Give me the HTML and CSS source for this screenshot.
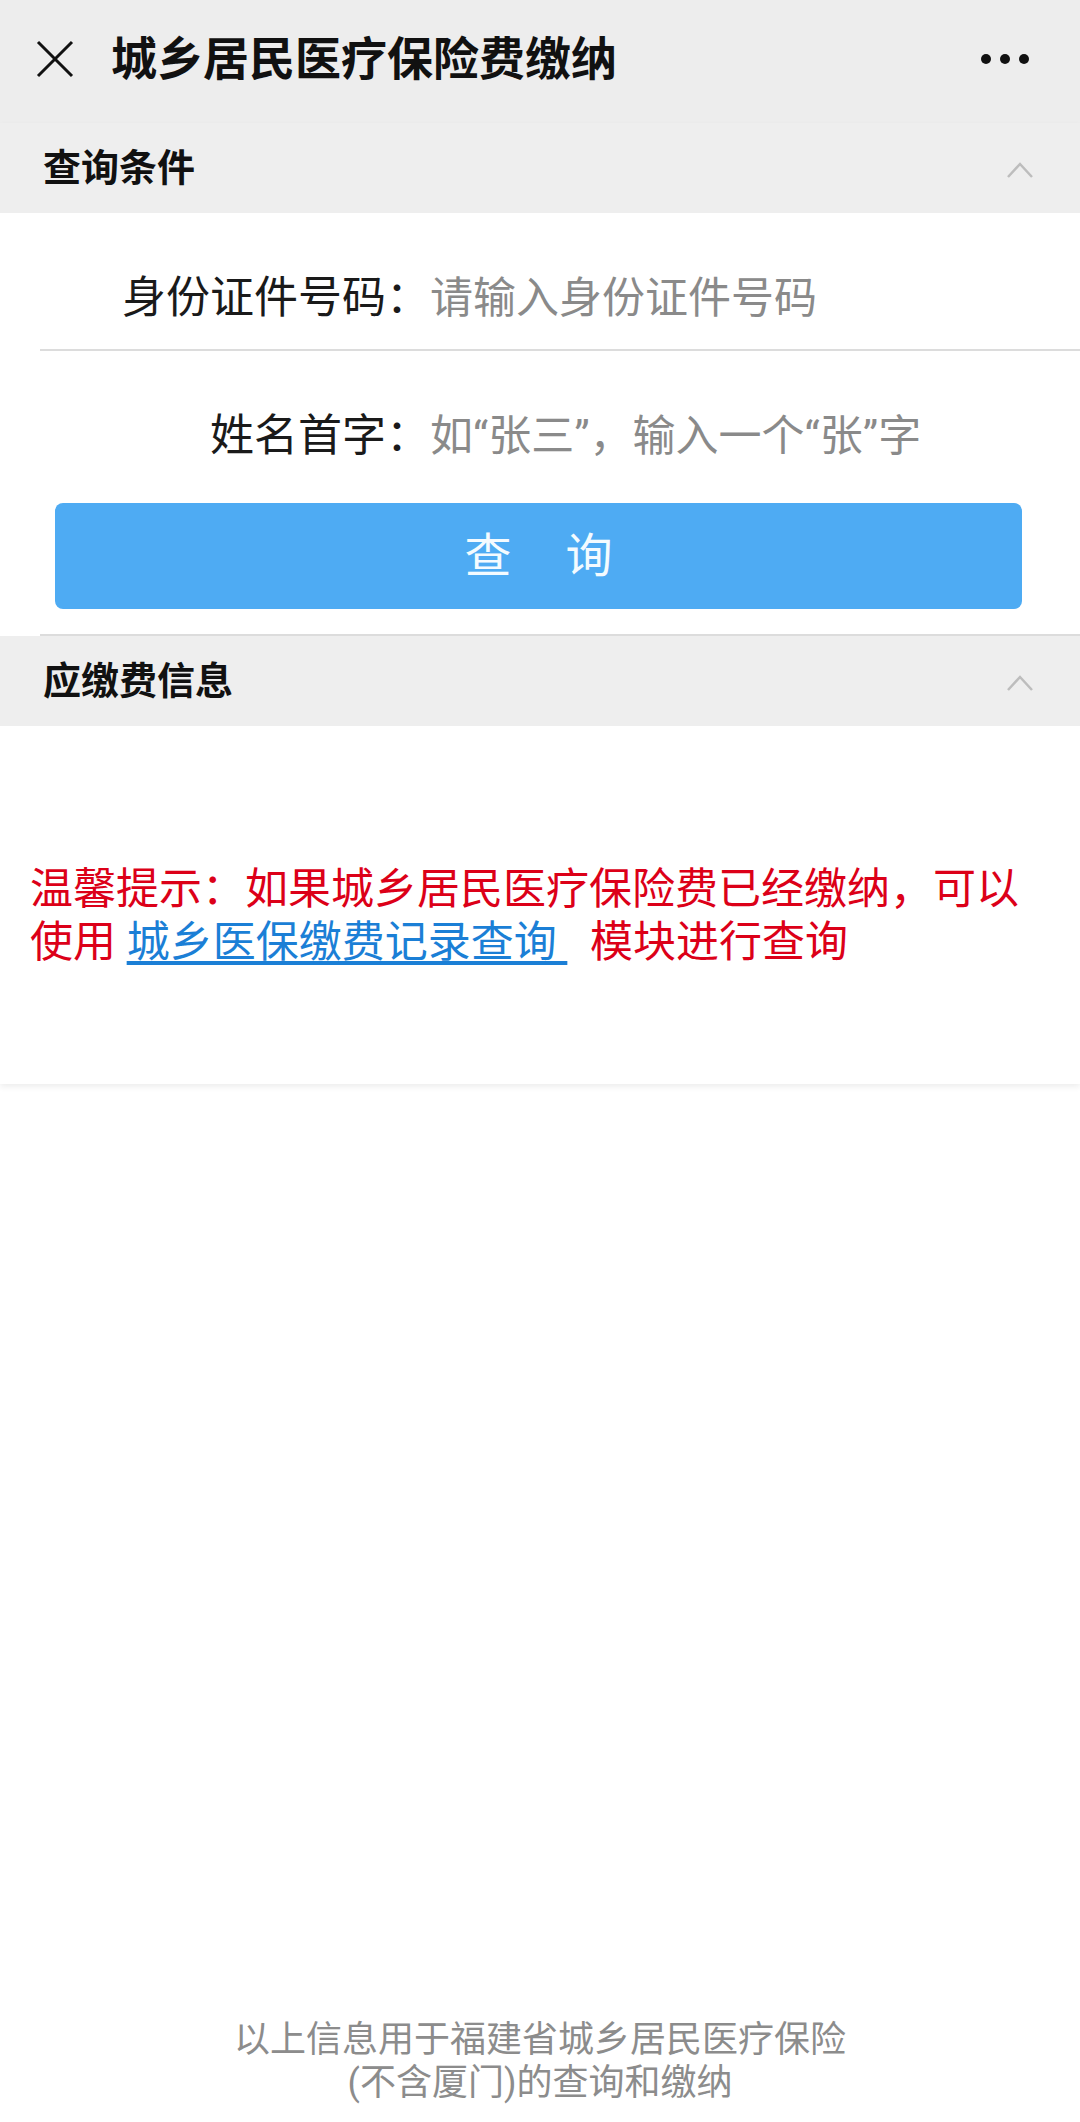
FILE: index.html
```html
<!DOCTYPE html>
<html lang="zh-CN">
<head>
<meta charset="utf-8">
<title>城乡居民医疗保险费缴纳</title>
<link rel="stylesheet" href="styles.css">
</head>
<body>
<div class="page">
  <header class="topbar">
    <svg class="close-icon" viewBox="0 0 38 38" width="38" height="38">
      <path d="M2 2 L36 36 M36 2 L2 36" stroke="#111" stroke-width="3" fill="none" stroke-linecap="butt"/>
    </svg>
    <h1 class="title">城乡居民医疗保险费缴纳</h1>
    <svg class="more-icon" viewBox="0 0 48 10" width="48" height="10">
      <circle cx="5" cy="5" r="5" fill="#111"/>
      <circle cx="24" cy="5" r="5" fill="#111"/>
      <circle cx="43" cy="5" r="5" fill="#111"/>
    </svg>
  </header>

  <main class="card">
    <div class="section-head">
      <span class="section-title">查询条件</span>
      <svg class="chevron" viewBox="0 0 26 16" width="26" height="16">
        <path d="M1 15 L13 2 L25 15" stroke="#bdbdbd" stroke-width="2.5" fill="none"/>
      </svg>
    </div>
    <div class="form">
      <div class="field field-first">
        <span class="field-label">身份证件号码：</span>
        <span class="field-placeholder">请输入身份证件号码</span>
      </div>
      <div class="divider"></div>
      <div class="field">
        <span class="field-label">姓名首字：</span>
        <span class="field-placeholder">如“张三”，输入一个“张”字</span>
      </div>
      <button class="query-btn" type="button">查询</button>
      <div class="divider divider-bottom"></div>
    </div>

    <div class="section-head">
      <span class="section-title">应缴费信息</span>
      <svg class="chevron" viewBox="0 0 26 16" width="26" height="16">
        <path d="M1 15 L13 2 L25 15" stroke="#bdbdbd" stroke-width="2.5" fill="none"/>
      </svg>
    </div>
    <div class="notice-wrap">
      <p class="notice">温馨提示：如果城乡居民医疗保险费已经缴纳，可以使用 <a class="notice-link" href="#">城乡医保缴费记录查询&nbsp;</a> 模块进行查询</p>
    </div>
  </main>

  <footer class="footer">以上信息用于福建省城乡居民医疗保险<br>(不含厦门)的查询和缴纳</footer>
</div>
</body>
</html>
```

FILE: styles.css
```css
* {
  box-sizing: border-box;
}

html, body {
  margin: 0;
  padding: 0;
  background: #ffffff;
}

body {
  font-family: Roboto, "Noto Sans CJK SC", sans-serif;
  color: #1a1a1a;
}

.page {
  width: 1080px;
  min-height: 2122px;
  display: flex;
  flex-direction: column;
  background: #ffffff;
}

.topbar {
  height: 123px;
  background: #ededed;
  display: flex;
  align-items: center;
  padding: 0 51px 6px 36px;
}

.close-icon {
  flex: none;
  display: block;
}

.title {
  margin: 0 0 0 37px;
  font-size: 46px;
  font-weight: 700;
  line-height: 60px;
  color: #111;
  flex: 1;
}

.more-icon {
  flex: none;
  display: block;
}

.card {
  background: #ffffff;
  box-shadow: 0 3px 6px rgba(0, 0, 0, 0.07);
}

.section-head {
  height: 90px;
  background: #eeeeee;
  display: flex;
  align-items: center;
  justify-content: space-between;
  padding: 0 47px 0 43px;
}

.section-title {
  font-size: 38px;
  font-weight: 700;
  color: #111;
  line-height: 50px;
}

.chevron {
  display: block;
  margin-top: 4px;
}

.form {
  display: flex;
  flex-direction: column;
}

.field {
  display: flex;
  align-items: center;
  padding-top: 60px;
  height: 110px;
  font-size: 44px;
  line-height: 50px;
}

.field-first {
  height: 136px;
  padding-bottom: 26px;
}

.field-label {
  width: 430px;
  text-align: right;
  color: #1a1a1a;
  flex: none;
}

.field-placeholder {
  color: #8a8a8a;
  white-space: nowrap;
  font-size: 43px;
}

.divider {
  height: 2px;
  background: #dcdcdc;
  margin-left: 40px;
}

.divider-bottom {
  margin-top: 25px;
}

.query-btn {
  margin: 42px 58px 0 55px;
  height: 106px;
  border: none;
  border-radius: 8px;
  background: #4eabf3;
  color: #f4fbff;
  font-family: Roboto, "Noto Sans CJK SC", sans-serif;
  font-size: 47px;
  letter-spacing: 54px;
  padding: 0 0 0 54px;
  line-height: 106px;
}

.notice-wrap {
  padding: 137px 45px 115px 30px;
}

.notice {
  margin: 0;
  font-size: 43px;
  line-height: 53px;
  color: #dc0018;
}

.notice-link {
  display: inline-block;
  color: #1b7fd6;
  text-decoration: underline;
  text-underline-offset: 4px;
  padding-right: 12px;
}

.footer {
  margin-top: auto;
  padding-bottom: 17px;
  text-align: center;
  font-size: 36px;
  line-height: 43px;
  color: #8c8c8c;
}
```
